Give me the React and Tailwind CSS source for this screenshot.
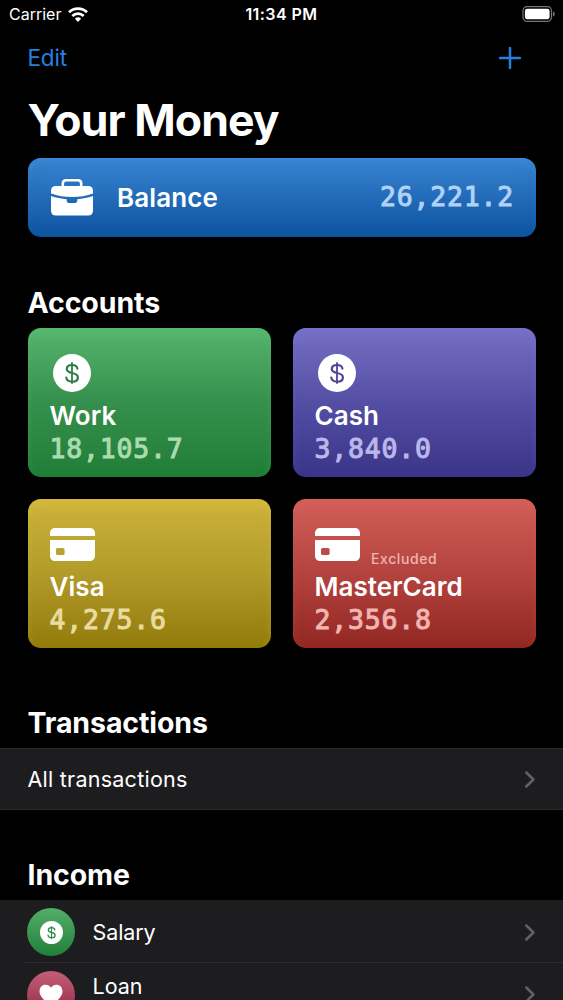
import React from "react";

const DollarCircle = ({ className, color }) => (
  <svg viewBox="0 0 38 38" className={className} aria-hidden="true">
    <circle cx="19" cy="19" r="19" fill="white" />
    <g fill="none" stroke={color} strokeWidth="2.2" strokeLinecap="round">
      <path d="M24.400 14.700C24.200 12.400 22 11 19.100 11c-3 0-5.300 1.500-5.300 4 0 2.300 1.700 3.200 5.200 4 3.800.8 5.900 1.800 5.900 4.400 0 2.700-2.500 4.200-5.700 4.200-3.400 0-5.700-1.500-5.900-4.100" />
      <path d="M19 9v20" strokeWidth="1.8" />
    </g>
  </svg>
);

const CardIcon = () => (
  <svg viewBox="0 0 45 33" className="h-[33px] w-[45px]" aria-hidden="true">
    <path
      fill="white"
      fillRule="evenodd"
      d="M0 8V5.500C0 2 2 0 5.500 0h34C43 0 45 2 45 5.500V8ZM0 12h45v15.500c0 3.500-2 5.500-5.500 5.500h-34C2 33 0 31 0 27.500ZM7.800 20C6.600 20 6 20.700 6 21.800v3.400C6 26.400 6.600 27 7.800 27h5c1.200 0 1.800-.6 1.800-1.800v-3.400c0-1.100-.6-1.800-1.800-1.800Z"
    />
  </svg>
);

const Briefcase = () => (
  <svg viewBox="0 0 42 37" className="h-[37px] w-[42px]" aria-hidden="true">
    <path d="M11.800 8V4.500c0-2 1.200-3.200 3.200-3.200h12c2 0 3.200 1.200 3.200 3.200V8" fill="none" stroke="white" strokeWidth="2.600" />
    <path fill="white" d="M5 7h32c3.300 0 5 1.700 5 5v2.600C35.500 17 28.500 18.100 21 18.100S6.500 17 0 14.600V12c0-3.300 1.700-5 5-5Z" />
    <path fill="white" d="M0 17c5.200 1.800 10.500 2.800 15.700 3.200v1.500c0 1.400.8 2.200 2.200 2.200h6.200c1.400 0 2.200-.8 2.200-2.200v-1.500C31.500 19.800 36.800 18.800 42 17v14.500c0 3.300-1.700 5-5 5H5c-3.300 0-5-1.700-5-5Z" />
  </svg>
);

const Chevron = () => (
  <svg viewBox="0 0 10 17" className="mr-[28.5px] h-[17px] w-[10px] shrink-0" aria-hidden="true">
    <path d="M1.300 1.500 8.400 8.500 1.300 15.500" fill="none" stroke="#626266" strokeWidth="2.5" strokeLinecap="round" strokeLinejoin="round" />
  </svg>
);

const Amount = ({ className, children }) => (
  <span
    className={`font-['DejaVu_Sans_Mono',monospace] text-[26.5px] leading-[34px] tracking-[0.8px] [-webkit-text-stroke:1px_currentColor] ${className}`}
  >
    {children}
  </span>
);

const accounts = [
  {
    name: "Work",
    amount: "18,105.7",
    kind: "cash",
    ink: "#2f7d4c",
    card: "from-[#56b36e] via-[#36904d] to-[#1f7d36] shadow-[inset_0_9px_12px_-3px_rgba(83,200,112,0.35)]",
    text: "text-[#a9dcae]",
  },
  {
    name: "Cash",
    amount: "3,840.0",
    kind: "cash",
    ink: "#4d4699",
    card: "from-[#7670c3] via-[#544fa4] to-[#3b3489] shadow-[inset_0_9px_12px_-3px_rgba(120,116,220,0.35)]",
    text: "text-[#bcb7ea]",
  },
  {
    name: "Visa",
    amount: "4,275.6",
    kind: "card",
    card: "from-[#cdb33c] via-[#b29b29] to-[#927b08] shadow-[inset_0_9px_12px_-3px_rgba(225,200,60,0.35)]",
    text: "text-[#e8dca0]",
  },
  {
    name: "MasterCard",
    amount: "2,356.8",
    kind: "card",
    note: "Excluded",
    card: "from-[#d15f59] via-[#b4433f] to-[#922722] shadow-[inset_0_9px_12px_-3px_rgba(230,95,90,0.35)]",
    text: "text-[#f0b5b1]",
  },
];

const AccountCard = ({ name, amount, kind, note, ink, card, text }) => (
  <div className={`flex h-[149px] flex-col rounded-[13px] bg-linear-to-b pl-[22px] ${card}`}>
    <div className="flex h-[72px] shrink-0 items-end">
      {kind === "cash" ? (
        <DollarCircle color={ink} className="mb-[8px] ml-[3px] size-[38px]" />
      ) : (
        <div className="mb-[10px]">
          <CardIcon />
        </div>
      )}
      {note && <span className={`mb-[2px] ml-[11.5px] text-[14px] font-medium leading-[20px] tracking-[0.6px] ${text}`}>{note}</span>}
    </div>
    <div className="text-[26px] font-semibold leading-[32px] tracking-[0.05px]">{name}</div>
    <Amount className={text}>{amount}</Amount>
  </div>
);

const Heading = ({ children, className }) => (
  <h2 className={`pl-[27.5px] text-[28.5px] font-bold leading-[34px] tracking-[-0.1px] ${className}`}>{children}</h2>
);

export default function App() {
  return (
    <main className="h-[1000px] w-[563px] overflow-hidden bg-black font-['Inter',sans-serif] text-white">
      <div className="grid h-[28px] grid-cols-3 items-center px-[9px]">
        <div className="flex items-center gap-[7px]">
          <span className="text-[16px] leading-[20px]">Carrier</span>
          <svg viewBox="0 0 20 15" className="h-[15px] w-[20px]" aria-hidden="true">
            <g fill="none" stroke="white" strokeWidth="2.7">
              <path d="M1 5.300a13 13 0 0 1 18 0" />
              <path d="M4.300 8.900a8.300 8.300 0 0 1 11.400 0" />
            </g>
            <path d="M6.900 11.700a4.600 4.600 0 0 1 6.200 0L10 14.900Z" fill="white" />
          </svg>
        </div>
        <span className="text-center text-[16px] font-semibold leading-[20px] tracking-[0.45px]">11:34 PM</span>
        <svg viewBox="0 0 34 16" className="ml-auto mr-[-2px] h-[16px] w-[34px]" aria-hidden="true">
          <rect x="1" y=".7" width="28.500" height="14.600" rx="4" fill="none" stroke="#77777b" strokeWidth="1.2" />
          <rect x="2.900" y="2.700" width="24.700" height="10.600" rx="2.400" fill="white" />
          <path d="M31 5.500c2.400.7 2.400 4.300 0 5Z" fill="#77777b" />
        </svg>
      </div>

      <div className="flex h-[60px] items-center justify-between pl-[27.5px] pr-[42px] text-[#2480e0]">
        <span className="text-[22.5px] leading-[28px] tracking-[-0.2px]">Edit</span>
        <svg viewBox="0 0 22 22" className="size-[22px]" aria-hidden="true">
          <path d="M11 1v20M1 11h20" stroke="currentColor" strokeWidth="2.5" strokeLinecap="round" />
        </svg>
      </div>

      <h1 className="h-[70px] pl-[27.5px] pt-[4px] text-[44.5px] font-bold leading-[56px] tracking-[-0.9px]">Your Money</h1>

      <section className="mx-[27.5px] flex h-[78.5px] items-center rounded-[13px] bg-linear-to-b from-[#3884d0] via-[#226bb9] to-[#0b549f] pl-[23.5px] pr-[21.5px] shadow-[inset_0_6px_10px_-3px_rgba(60,145,230,0.35)]">
        <Briefcase />
        <span className="ml-[24px] flex-1 pt-px text-[26px] font-semibold leading-[32px] tracking-[0.1px]">Balance</span>
        <Amount className="text-[#b1d2f8]">26,221.2</Amount>
      </section>

      <Heading className="mt-[49.5px]">Accounts</Heading>
      <section className="mx-[27.5px] mt-[8px] grid grid-cols-2 gap-x-[22px] gap-y-[22px]">
        {accounts.map((account) => (
          <AccountCard key={account.name} {...account} />
        ))}
      </section>

      <Heading className="mt-[58px]">Transactions</Heading>
      <div className="mt-[8px] flex h-[62px] items-center justify-between border-y border-[#29292b] bg-[#1d1c1f] pl-[27.5px]">
        <span className="text-[21.5px] leading-[28px] tracking-[0.25px]">All transactions</span>
        <Chevron />
      </div>

      <Heading className="mt-[48px]">Income</Heading>
      <ul className="mt-[8px] bg-[#1d1c1f]">
        <li className="flex h-[62px] items-center pl-[27px] pt-[2px]">
          <span className="flex size-[48px] items-center justify-center rounded-full bg-linear-to-b from-[#52ae69] to-[#208039]">
            <DollarCircle color="#2f8c4a" className="size-[23px]" />
          </span>
          <span className="ml-[17.5px] flex-1 text-[21.5px] leading-[28px] tracking-[-0.1px]">Salary</span>
          <Chevron />
        </li>
        <li className="ml-[24px] flex h-[63px] items-center border-t border-[#2c2c2e] pl-[3px]">
          <span className="mt-[2px] flex size-[48px] items-center justify-center rounded-full bg-linear-to-b from-[#c65d76] to-[#8c2842]">
            <svg viewBox="0 0 24 22" className="h-[22px] w-[24px]" aria-hidden="true">
              <path fill="white" d="M12 21.500C4.500 16.500.5 11.800.5 7.200.5 3.400 3.100.7 6.600.7c2.300 0 4.200 1.100 5.400 3.100C13.200 1.800 15.100.7 17.400.7c3.500 0 6.100 2.700 6.100 6.500 0 4.600-4 9.300-11.500 14.300Z" />
            </svg>
          </span>
          <span className="mb-[17px] ml-[17.5px] flex-1 text-[21.5px] leading-[28px]">Loan</span>
          <Chevron />
        </li>
      </ul>
    </main>
  );
}
